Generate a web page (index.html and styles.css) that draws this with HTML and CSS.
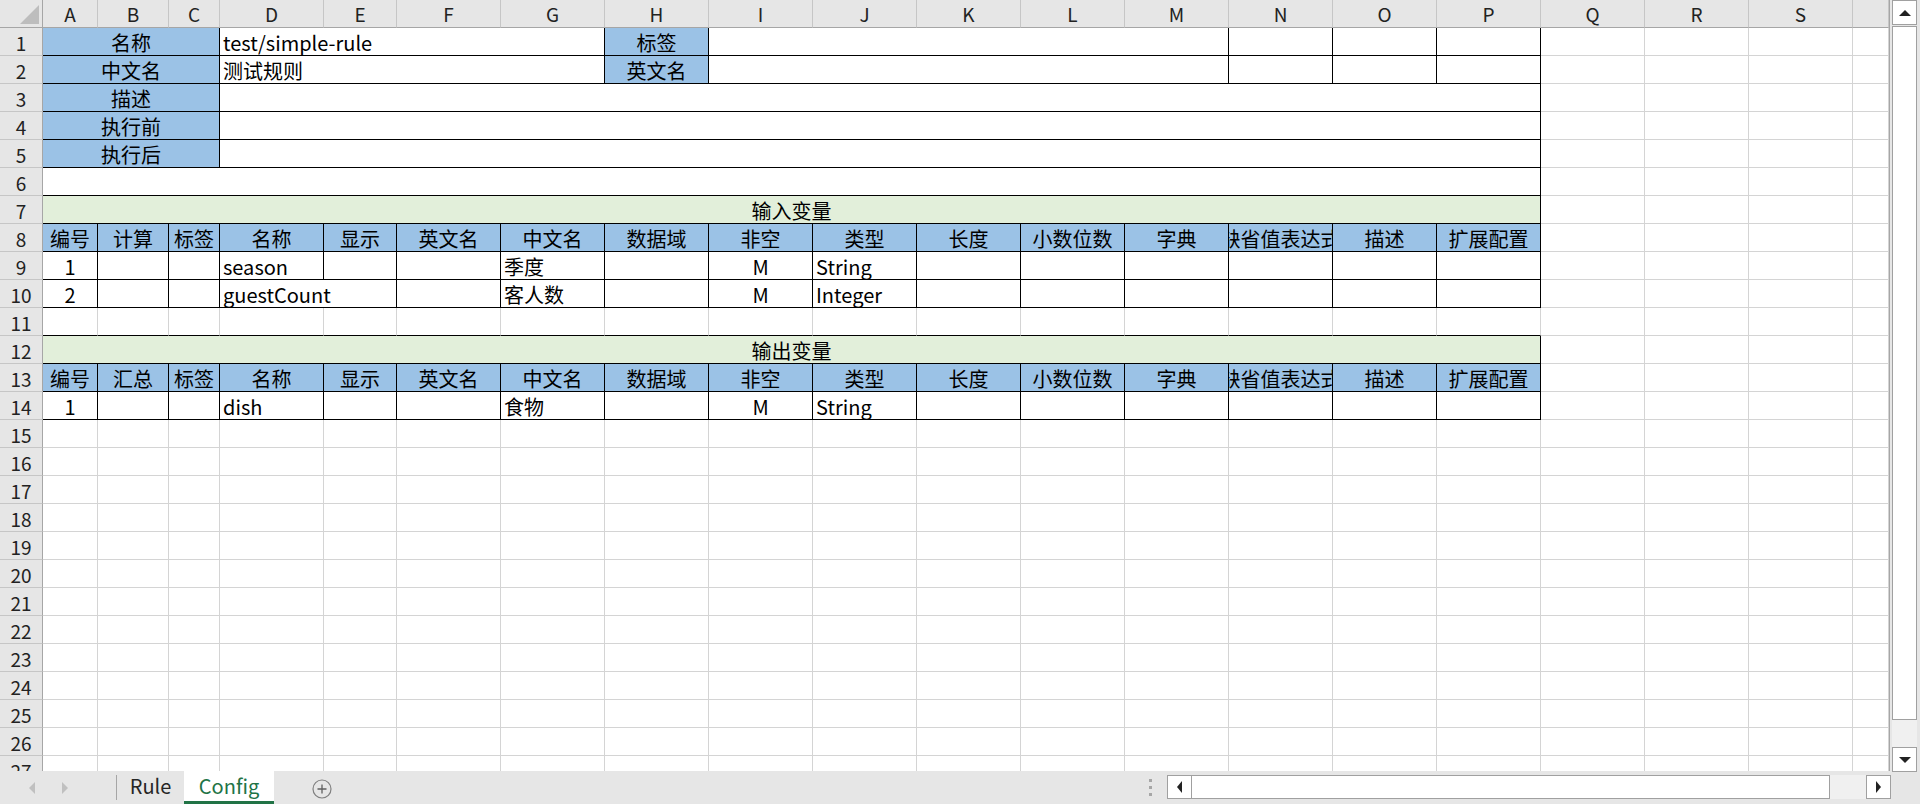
FILE: index.html
```html
<!DOCTYPE html>
<html lang="zh-CN">
<head>
<meta charset="utf-8">
<title>Config</title>
<link rel="stylesheet" href="styles.css">
</head>
<body>
<div class="app">
  <div class="main">
    <div class="sheet">
      <div class="corner"><span class="tri"></span></div>
      <div class="ch">A</div><div class="ch">B</div><div class="ch">C</div><div class="ch">D</div><div class="ch">E</div><div class="ch">F</div><div class="ch">G</div><div class="ch">H</div><div class="ch">I</div><div class="ch">J</div><div class="ch">K</div><div class="ch">L</div><div class="ch">M</div><div class="ch">N</div><div class="ch">O</div><div class="ch">P</div><div class="ch">Q</div><div class="ch">R</div><div class="ch">S</div><div class="ch"></div>

      <div class="rh">1</div><div class="s3 k bl c">名称</div><div class="s4 k l">test/simple-rule</div><div class="k bl c">标签</div><div class="s5 k"></div><i class="k"></i><i class="k"></i><i class="k"></i><i></i><i></i><i></i><i></i>
      <div class="rh">2</div><div class="s3 k bl c">中文名</div><div class="s4 k l">测试规则</div><div class="k bl c">英文名</div><div class="s5 k"></div><i class="k"></i><i class="k"></i><i class="k"></i><i></i><i></i><i></i><i></i>
      <div class="rh">3</div><div class="s3 k bl c">描述</div><div class="s13 k"></div><i></i><i></i><i></i><i></i>
      <div class="rh">4</div><div class="s3 k bl c">执行前</div><div class="s13 k"></div><i></i><i></i><i></i><i></i>
      <div class="rh">5</div><div class="s3 k bl c">执行后</div><div class="s13 k"></div><i></i><i></i><i></i><i></i>
      <div class="rh">6</div><div class="s16 k"></div><i></i><i></i><i></i><i></i>
      <div class="rh">7</div><div class="s16 k gr c">输入变量</div><i></i><i></i><i></i><i></i>

      <div class="rh">8</div><div class="k bl c">编号</div><div class="k bl c">计算</div><div class="k bl c">标签</div><div class="k bl c">名称</div><div class="k bl c">显示</div><div class="k bl c">英文名</div><div class="k bl c">中文名</div><div class="k bl c">数据域</div><div class="k bl c">非空</div><div class="k bl c">类型</div><div class="k bl c">长度</div><div class="k bl c">小数位数</div><div class="k bl c">字典</div><div class="k bl c clip">缺省值表达式</div><div class="k bl c">描述</div><div class="k bl c">扩展配置</div><i></i><i></i><i></i><i></i>
      <div class="rh">9</div><div class="k c">1</div><i class="k"></i><i class="k"></i><div class="k l">season</div><i class="k"></i><i class="k"></i><div class="k l">季度</div><i class="k"></i><div class="k c">M</div><div class="k l">String</div><i class="k"></i><i class="k"></i><i class="k"></i><i class="k"></i><i class="k"></i><i class="k"></i><i></i><i></i><i></i><i></i>
      <div class="rh">10</div><div class="k c">2</div><i class="k"></i><i class="k"></i><div class="s2 k l">guestCount</div><i class="k"></i><div class="k l">客人数</div><i class="k"></i><div class="k c">M</div><div class="k l">Integer</div><i class="k"></i><i class="k"></i><i class="k"></i><i class="k"></i><i class="k"></i><i class="k"></i><i></i><i></i><i></i><i></i>
      <div class="rh">11</div><i class="kb"></i><i class="kb"></i><i class="kb"></i><i class="kb"></i><i class="kb"></i><i class="kb"></i><i class="kb"></i><i class="kb"></i><i class="kb"></i><i class="kb"></i><i class="kb"></i><i class="kb"></i><i class="kb"></i><i class="kb"></i><i class="kb"></i><i class="kb"></i><i></i><i></i><i></i><i></i>
      <div class="rh">12</div><div class="s16 k gr c">输出变量</div><i></i><i></i><i></i><i></i>
      <div class="rh">13</div><div class="k bl c">编号</div><div class="k bl c">汇总</div><div class="k bl c">标签</div><div class="k bl c">名称</div><div class="k bl c">显示</div><div class="k bl c">英文名</div><div class="k bl c">中文名</div><div class="k bl c">数据域</div><div class="k bl c">非空</div><div class="k bl c">类型</div><div class="k bl c">长度</div><div class="k bl c">小数位数</div><div class="k bl c">字典</div><div class="k bl c clip">缺省值表达式</div><div class="k bl c">描述</div><div class="k bl c">扩展配置</div><i></i><i></i><i></i><i></i>
      <div class="rh">14</div><div class="k c">1</div><i class="k"></i><i class="k"></i><div class="k l">dish</div><i class="k"></i><i class="k"></i><div class="k l">食物</div><i class="k"></i><div class="k c">M</div><div class="k l">String</div><i class="k"></i><i class="k"></i><i class="k"></i><i class="k"></i><i class="k"></i><i class="k"></i><i></i><i></i><i></i><i></i>

      <div class="rh">15</div><i></i><i></i><i></i><i></i><i></i><i></i><i></i><i></i><i></i><i></i><i></i><i></i><i></i><i></i><i></i><i></i><i></i><i></i><i></i><i></i>
      <div class="rh">16</div><i></i><i></i><i></i><i></i><i></i><i></i><i></i><i></i><i></i><i></i><i></i><i></i><i></i><i></i><i></i><i></i><i></i><i></i><i></i><i></i>
      <div class="rh">17</div><i></i><i></i><i></i><i></i><i></i><i></i><i></i><i></i><i></i><i></i><i></i><i></i><i></i><i></i><i></i><i></i><i></i><i></i><i></i><i></i>
      <div class="rh">18</div><i></i><i></i><i></i><i></i><i></i><i></i><i></i><i></i><i></i><i></i><i></i><i></i><i></i><i></i><i></i><i></i><i></i><i></i><i></i><i></i>
      <div class="rh">19</div><i></i><i></i><i></i><i></i><i></i><i></i><i></i><i></i><i></i><i></i><i></i><i></i><i></i><i></i><i></i><i></i><i></i><i></i><i></i><i></i>
      <div class="rh">20</div><i></i><i></i><i></i><i></i><i></i><i></i><i></i><i></i><i></i><i></i><i></i><i></i><i></i><i></i><i></i><i></i><i></i><i></i><i></i><i></i>
      <div class="rh">21</div><i></i><i></i><i></i><i></i><i></i><i></i><i></i><i></i><i></i><i></i><i></i><i></i><i></i><i></i><i></i><i></i><i></i><i></i><i></i><i></i>
      <div class="rh">22</div><i></i><i></i><i></i><i></i><i></i><i></i><i></i><i></i><i></i><i></i><i></i><i></i><i></i><i></i><i></i><i></i><i></i><i></i><i></i><i></i>
      <div class="rh">23</div><i></i><i></i><i></i><i></i><i></i><i></i><i></i><i></i><i></i><i></i><i></i><i></i><i></i><i></i><i></i><i></i><i></i><i></i><i></i><i></i>
      <div class="rh">24</div><i></i><i></i><i></i><i></i><i></i><i></i><i></i><i></i><i></i><i></i><i></i><i></i><i></i><i></i><i></i><i></i><i></i><i></i><i></i><i></i>
      <div class="rh">25</div><i></i><i></i><i></i><i></i><i></i><i></i><i></i><i></i><i></i><i></i><i></i><i></i><i></i><i></i><i></i><i></i><i></i><i></i><i></i><i></i>
      <div class="rh">26</div><i></i><i></i><i></i><i></i><i></i><i></i><i></i><i></i><i></i><i></i><i></i><i></i><i></i><i></i><i></i><i></i><i></i><i></i><i></i><i></i>
      <div class="rh">27</div><i></i><i></i><i></i><i></i><i></i><i></i><i></i><i></i><i></i><i></i><i></i><i></i><i></i><i></i><i></i><i></i><i></i><i></i><i></i><i></i>
    </div>
    <div class="vscroll">
      <div class="sbtn"><span class="up"></span></div>
      <div class="vthumb"></div>
      <div class="vtrack"></div>
      <div class="sbtn"><span class="down"></span></div>
    </div>
  </div>
  <div class="tabbar">
    <div class="navs"><span class="nl"></span><span class="nr"></span></div>
    <div class="tabsep"></div>
    <div class="tab">Rule</div>
    <div class="tab active">Config</div>
    <div class="addtab"><svg width="20" height="20" viewBox="0 0 20 20"><circle cx="10" cy="10" r="9" fill="none" stroke="#808080" stroke-width="1.2"/><path d="M10 5.5v9M5.5 10h9" stroke="#606060" stroke-width="1.3"/></svg></div>
    <div class="spacer"></div>
    <div class="splitter"><span></span><span></span><span></span></div>
    <div class="hscroll">
      <div class="hbtn"><span class="left"></span></div>
      <div class="hthumb"></div>
      <div class="htrack"></div>
      <div class="hbtn"><span class="right"></span></div>
    </div>
  </div>
</div>
</body>
</html>
```

FILE: styles.css
```css
* { box-sizing: border-box; }
html, body { margin: 0; padding: 0; }
body {
  width: 1920px;
  height: 804px;
  overflow: hidden;
  background: #e6e6e6;
  font-family: "Noto Sans CJK SC", "Noto Sans", sans-serif;
  color: #000;
}
.app { display: flex; flex-direction: column; width: 1920px; height: 804px; }
.main { display: flex; height: 771px; }

.sheet {
  width: 1890px;
  height: 771px;
  overflow: hidden;
  background: #fff;
  border-right: 1px solid #a6a6a6;
  display: grid;
  grid-template-columns: 43px 55px 71px 51px 104px 73px repeat(14, 104px) 36px;
  grid-template-rows: 28px;
  grid-auto-rows: 28px;
  font-size: 20px;
}
.sheet > * {
  display: flex;
  align-items: center;
  border-right: 1px solid #d4d4d4;
  border-bottom: 1px solid #d4d4d4;
  white-space: nowrap;
  line-height: 26px;
  padding-top: 3px;
  min-width: 0;
  font-style: normal;
}
.sheet > .corner {
  background: #e6e6e6;
  border-right-color: #a6a6a6;
  border-bottom-color: #a6a6a6;
  position: relative;
}
.corner .tri {
  position: absolute;
  right: 3px;
  bottom: 3px;
  width: 0; height: 0;
  border-left: 19px solid transparent;
  border-bottom: 19px solid #bdbdbd;
}
.sheet > .ch {
  background: #e6e6e6;
  border-right-color: #c6c6c6;
  border-bottom-color: #a6a6a6;
  justify-content: center;
  color: #222;
  font-size: 19px;
  padding-top: 0;
}
.sheet > .rh {
  background: #e6e6e6;
  border-right-color: #a6a6a6;
  border-bottom-color: #c6c6c6;
  justify-content: center;
  color: #222;
  font-size: 19px;
}
.sheet > .k { border-right-color: #000; border-bottom-color: #000; }
.sheet > .kb { border-bottom-color: #000; }
.bl { background: #9bc2e6; }
.gr { background: #e2efda; }
.c { justify-content: center; }
.l { padding-left: 3px; }
.clip { overflow: hidden; }
.s2 { grid-column: span 2; }
.s3 { grid-column: span 3; }
.s4 { grid-column: span 4; }
.s5 { grid-column: span 5; }
.s13 { grid-column: span 13; }
.s16 { grid-column: span 16; }

/* vertical scrollbar */
.vscroll {
  width: 30px;
  height: 772px;
  padding-left: 2px;
  padding-right: 3px;
  display: flex;
  flex-direction: column;
  background: #e6e6e6;
  position: relative;
  z-index: 1;
}
.sbtn {
  height: 25px;
  background: #fff;
  border: 1px solid #a0a0a0;
  display: flex;
  align-items: center;
  justify-content: center;
  flex: none;
}
.up { width: 0; height: 0; border-left: 6px solid transparent; border-right: 6px solid transparent; border-bottom: 6px solid #222; }
.down { width: 0; height: 0; border-left: 6px solid transparent; border-right: 6px solid transparent; border-top: 6px solid #222; }
.vthumb {
  height: 694px;
  margin-top: 1px;
  background: #fff;
  border: 1px solid #a0a0a0;
  flex: none;
}
.vtrack { flex: 1; background: #f0f0f0; }

/* tab bar */
.tabbar {
  height: 33px;
  display: flex;
  align-items: stretch;
  background: #e6e6e6;
  font-size: 20px;
}
.navs { width: 116px; display: flex; align-items: center; padding-left: 29px; gap: 27px; }
.nl { width: 0; height: 0; border-top: 6px solid transparent; border-bottom: 6px solid transparent; border-right: 6px solid #c0c0c0; }
.nr { width: 0; height: 0; border-top: 6px solid transparent; border-bottom: 6px solid transparent; border-left: 6px solid #c0c0c0; }
.tabsep { width: 1px; background: #a6a6a6; margin: 4px 0 4px; }
.tab {
  width: 67px;
  display: flex;
  align-items: center;
  justify-content: center;
  color: #262626;
  line-height: 28px;
  padding-bottom: 3px;
}
.tab.active {
  background: #fff;
  color: #217346;
  border-bottom: 3px solid #217346;
  width: 90px;
  padding-bottom: 0;
}
.addtab { display: flex; align-items: center; padding-left: 38px; padding-top: 3px; }
.spacer { flex: 1; }
.splitter { width: 18px; display: flex; flex-direction: column; justify-content: center; gap: 4px; }
.splitter span { width: 3px; height: 3px; background: #a6a6a6; }
.hscroll { width: 724px; margin: 4px 29px 5px 0; display: flex; }
.hbtn {
  width: 25px;
  background: #fff;
  border: 1px solid #a0a0a0;
  display: flex;
  align-items: center;
  justify-content: center;
  flex: none;
}
.left { width: 0; height: 0; border-top: 6px solid transparent; border-bottom: 6px solid transparent; border-right: 5px solid #222; }
.right { width: 0; height: 0; border-top: 6px solid transparent; border-bottom: 6px solid transparent; border-left: 5px solid #222; }
.hthumb { width: 638px; background: #fff; border: 1px solid #a0a0a0; border-left: none; }
.htrack { flex: 1; background: #f0f0f0; }
```
